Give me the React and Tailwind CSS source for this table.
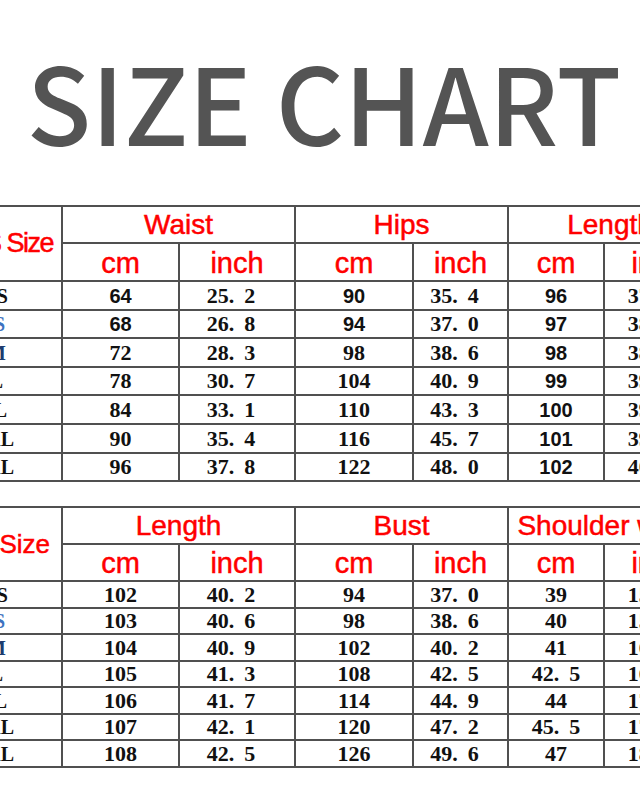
// size chart image, two tables cropped at both sides
const TABLES = [
  {
    label: 'US Size',
    labelCls: 'pr-[8px] text-[27px] tracking-[-1.5px]',
    groups: ['Waist', 'Hips', 'Length'],
    rowH: ['h-[29px]', 'h-[28px]', 'h-[29px]', 'h-[28px]', 'h-[29px]', 'h-[29px]', 'h-[28px]'],
    headH: ['h-[37px]', 'h-[38px]'],
    sans: ['0-0', '1-0', '0-2', '1-2', '0-4', '1-4', '2-4', '3-4', '4-4', '5-4', '6-4'],
    rows: [
      ['64', '25.2', '90', '35.4', '96', '37.8'],
      ['68', '26.8', '94', '37.0', '97', '38.2'],
      ['72', '28.3', '98', '38.6', '98', '38.6'],
      ['78', '30.7', '104', '40.9', '99', '39.0'],
      ['84', '33.1', '110', '43.3', '100', '39.4'],
      ['90', '35.4', '116', '45.7', '101', '39.8'],
      ['96', '37.8', '122', '48.0', '102', '40.2'],
    ],
  },
  {
    label: 'US Size',
    labelCls: 'pr-[11px] text-[26px]',
    groups: ['Length', 'Bust', 'Shoulder width'],
    rowH: ['h-[27px]', 'h-[26px]', 'h-[27px]', 'h-[26px]', 'h-[27px]', 'h-[26px]', 'h-[27px]'],
    headH: ['h-[37px]', 'h-[37px]'],
    sans: [],
    rows: [
      ['102', '40.2', '94', '37.0', '39', '15.4'],
      ['103', '40.6', '98', '38.6', '40', '15.7'],
      ['104', '40.9', '102', '40.2', '41', '16.1'],
      ['105', '41.3', '108', '42.5', '42.5', '16.7'],
      ['106', '41.7', '114', '44.9', '44', '17.3'],
      ['107', '42.1', '120', '47.2', '45.5', '17.9'],
      ['108', '42.5', '126', '49.6', '47', '18.5'],
    ],
  },
]

// size labels: only the tail of each is visible at the left edge
const SIZES = [
  { name: 'XS', pad: 'pr-[53px]', color: 'text-[#111]' },
  { name: 'S',  pad: 'pr-[56px]', color: 'text-[#3d72c0]' },
  { name: 'M',  pad: 'pr-[55px]', color: 'text-[#1d3b6e]' },
  { name: 'L',  pad: 'pr-[58px]', color: 'text-[#222]' },
  { name: 'XL', pad: 'pr-[54px]', color: 'text-[#111]' },
  { name: '2XL', pad: 'pr-[47px]', color: 'text-[#111]' },
  { name: '3XL', pad: 'pr-[47px]', color: 'text-[#111]' },
]

const COLS = ['w-[120px]', 'w-[117px]', 'w-[116px]', 'w-[118px]', 'w-[95px]', 'w-[96px]', 'w-[108px]']

const border = 'border-2 border-[#505050]'
const red = "text-[#f00] font-['Liberation_Sans',sans-serif] font-normal leading-none [-webkit-text-stroke:0.5px_#f00]"

function Num({ value, sans }) {
  if (sans) {
    return <span className="font-['Liberation_Sans',sans-serif] font-bold text-[20px]">{value}</span>
  }
  const [a, b] = value.split('.')
  return (
    <span className="font-['Liberation_Serif',serif] font-bold text-[22px]">
      {a}
      {b !== undefined && (
        <>
          .<span className="ml-[10px]">{b}</span>
        </>
      )}
    </span>
  )
}

function SizeTable({ t, className }) {
  return (
    <table className={`table-fixed border-collapse ml-[-59px] w-[770px] ${className}`}>
      <colgroup>
        {COLS.map((c, i) => <col key={i} className={c} />)}
      </colgroup>
      <thead>
        <tr className={t.headH[0]}>
          <th rowSpan={2} className={`${border} p-0 overflow-hidden`}>
            <div className={`text-right whitespace-nowrap ${red} ${t.labelCls}`}>{t.label}</div>
          </th>
          {t.groups.map(g => (
            <th key={g} colSpan={2} className={`${border} p-0 ${red} text-[28px] whitespace-nowrap`}>
              {g}
            </th>
          ))}
        </tr>
        <tr className={t.headH[1]}>
          {t.groups.map(g => [
            <th key={g + 'cm'} className={`${border} p-0 ${red} text-[29px] pt-[2px]`}>cm</th>,
            <th key={g + 'in'} className={`${border} p-0 ${red} text-[29px] pt-[2px]`}>inch</th>,
          ])}
        </tr>
      </thead>
      <tbody>
        {t.rows.map((row, r) => (
          <tr key={r} className={t.rowH[r]}>
            <td className={`${border} p-0 overflow-hidden`}>
              <div className={`text-right whitespace-nowrap leading-none font-['Liberation_Serif',serif] font-bold text-[20px] ${SIZES[r].pad} ${SIZES[r].color}`}>
                {SIZES[r].name}
              </div>
            </td>
            {row.map((v, c) => (
              <td
                key={c}
                className={`${border} p-0 text-center leading-none text-[#111] whitespace-nowrap ${c % 2 === 1 ? 'pr-[12px]' : ''}`}
              >
                <Num value={v} sans={t.sans.includes(`${r}-${c}`)} />
              </td>
            ))}
          </tr>
        ))}
      </tbody>
    </table>
  )
}

export default function App() {
  return (
    <div className="w-[640px] h-[800px] overflow-hidden bg-white">
      <h1 className="pt-[47px] pl-[8px] h-[153px] text-center text-[106px] leading-[106px] font-medium text-[#545454] font-['Noto_Sans_CJK_SC',sans-serif] whitespace-nowrap">
        SIZE CHART
      </h1>
      <SizeTable t={TABLES[0]} className="mt-[52px]" />
      <SizeTable t={TABLES[1]} className="mt-[24px]" />
    </div>
  )
}
